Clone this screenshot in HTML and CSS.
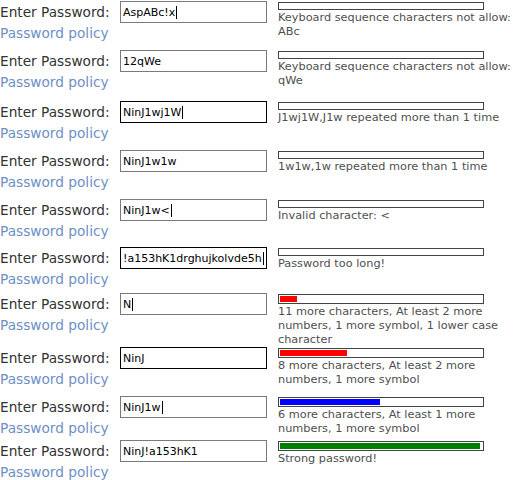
FILE: index.html
```html
<!DOCTYPE html>
<html>
<head>
<meta charset="utf-8">
<link rel="stylesheet" href="styles.css">
</head>
<body>
<div class="list">
  <div class="row">
    <div class="left">
      <div class="entry"><span class="label">Enter Password:</span><div class="field"><span>AspABc!x</span><span class="caret"></span></div></div>
      <a class="policy">Password policy</a>
    </div>
    <div class="right">
      <div class="meter"></div>
      <div class="msg">Keyboard sequence characters not allow: ABc</div>
    </div>
  </div>
  <div class="row h51">
    <div class="left">
      <div class="entry"><span class="label">Enter Password:</span><div class="field"><span>12qWe</span></div></div>
      <a class="policy">Password policy</a>
    </div>
    <div class="right">
      <div class="meter"></div>
      <div class="msg">Keyboard sequence characters not allow: qWe</div>
    </div>
  </div>
  <div class="row">
    <div class="left">
      <div class="entry"><span class="label">Enter Password:</span><div class="field dark"><span>NinJ1wj1W</span><span class="caret"></span></div></div>
      <a class="policy">Password policy</a>
    </div>
    <div class="right">
      <div class="meter"></div>
      <div class="msg">J1wj1W,J1w repeated more than 1 time</div>
    </div>
  </div>
  <div class="row">
    <div class="left">
      <div class="entry"><span class="label">Enter Password:</span><div class="field"><span>NinJ1w1w</span></div></div>
      <a class="policy">Password policy</a>
    </div>
    <div class="right">
      <div class="meter"></div>
      <div class="msg">1w1w,1w repeated more than 1 time</div>
    </div>
  </div>
  <div class="row h48">
    <div class="left">
      <div class="entry"><span class="label">Enter Password:</span><div class="field"><span>NinJ1w&lt;</span><span class="caret"></span></div></div>
      <a class="policy">Password policy</a>
    </div>
    <div class="right">
      <div class="meter"></div>
      <div class="msg">Invalid character: &lt;</div>
    </div>
  </div>
  <div class="row h46">
    <div class="left">
      <div class="entry"><span class="label">Enter Password:</span><div class="field dark"><span>!a153hK1drghujkolvde5h</span><span class="caret"></span></div></div>
      <a class="policy">Password policy</a>
    </div>
    <div class="right">
      <div class="meter"></div>
      <div class="msg">Password too long!</div>
    </div>
  </div>
  <div class="row h54">
    <div class="left">
      <div class="entry"><span class="label">Enter Password:</span><div class="field"><span>N</span><span class="caret"></span></div></div>
      <a class="policy">Password policy</a>
    </div>
    <div class="right">
      <div class="meter"><div class="fill red" style="width:17px"></div></div>
      <div class="msg">11 more characters, At least 2 more numbers, 1 more symbol, 1 lower case character</div>
    </div>
  </div>
  <div class="row">
    <div class="left">
      <div class="entry"><span class="label">Enter Password:</span><div class="field dark"><span>NinJ</span></div></div>
      <a class="policy">Password policy</a>
    </div>
    <div class="right">
      <div class="meter"><div class="fill red" style="width:67px"></div></div>
      <div class="msg">8 more characters, At least 2 more numbers, 1 more symbol</div>
    </div>
  </div>
  <div class="row h44">
    <div class="left">
      <div class="entry"><span class="label">Enter Password:</span><div class="field"><span>NinJ1w</span><span class="caret"></span></div></div>
      <a class="policy">Password policy</a>
    </div>
    <div class="right">
      <div class="meter"><div class="fill blue" style="width:100px"></div></div>
      <div class="msg">6 more characters, At least 1 more numbers, 1 more symbol</div>
    </div>
  </div>
  <div class="row">
    <div class="left">
      <div class="entry"><span class="label">Enter Password:</span><div class="field"><span>NinJ!a153hK1</span></div></div>
      <a class="policy">Password policy</a>
    </div>
    <div class="right">
      <div class="meter"><div class="fill green" style="width:200px"></div></div>
      <div class="msg">Strong password!</div>
    </div>
  </div>
</div>
</body>
</html>
```

FILE: styles.css
```css
html, body {
  margin: 0;
  padding: 0;
  background: #ffffff;
}

body {
  font-family: "DejaVu Sans", Verdana, sans-serif;
  color: #333333;
}

.list {
  display: flex;
  flex-direction: column;
}

.row {
  display: grid;
  grid-template-columns: 267px 236px;
  column-gap: 11px;
  height: 49px;
  align-items: start;
}

.row.h51 { height: 51px; }
.row.h48 { height: 48px; }
.row.h46 { height: 46px; }
.row.h44 { height: 44px; }
.row.h54 { height: 54px; }

.left {
  display: flex;
  flex-direction: column;
}

.entry {
  display: flex;
  align-items: center;
  height: 22px;
  margin-top: 1px;
}

.label {
  flex: 0 0 120px;
  font-size: 13.7px;
  color: #333333;
  white-space: nowrap;
}

.field {
  box-sizing: border-box;
  width: 147px;
  height: 22px;
  border: 1px solid #7a7a7a;
  padding: 0 2px;
  display: flex;
  align-items: center;
  overflow: hidden;
  white-space: nowrap;
  font-size: 11px;
  color: #000000;
  background: #ffffff;
}

.field.dark {
  border-color: #000000;
}

.caret {
  display: inline-block;
  flex: 0 0 1px;
  width: 1px;
  height: 13px;
  margin-left: 1px;
  background: #000000;
}

.policy {
  font-size: 13.7px;
  line-height: 20px;
  color: #6e8fc6;
  text-decoration: none;
}

.right {
  display: flex;
  flex-direction: column;
}

.meter {
  box-sizing: border-box;
  width: 206px;
  min-height: 8px;
  margin-top: 2px;
  border: 1px solid #444444;
  padding: 1px;
  background: #ffffff;
}

.fill {
  height: 6px;
}

.fill.red { background: #ff0000; }
.fill.blue { background: #0000ff; }
.fill.green { background: #008000; }

.msg {
  font-size: 11.3px;
  line-height: 14px;
  margin-top: 1px;
  color: #4f4f4f;
}
```
